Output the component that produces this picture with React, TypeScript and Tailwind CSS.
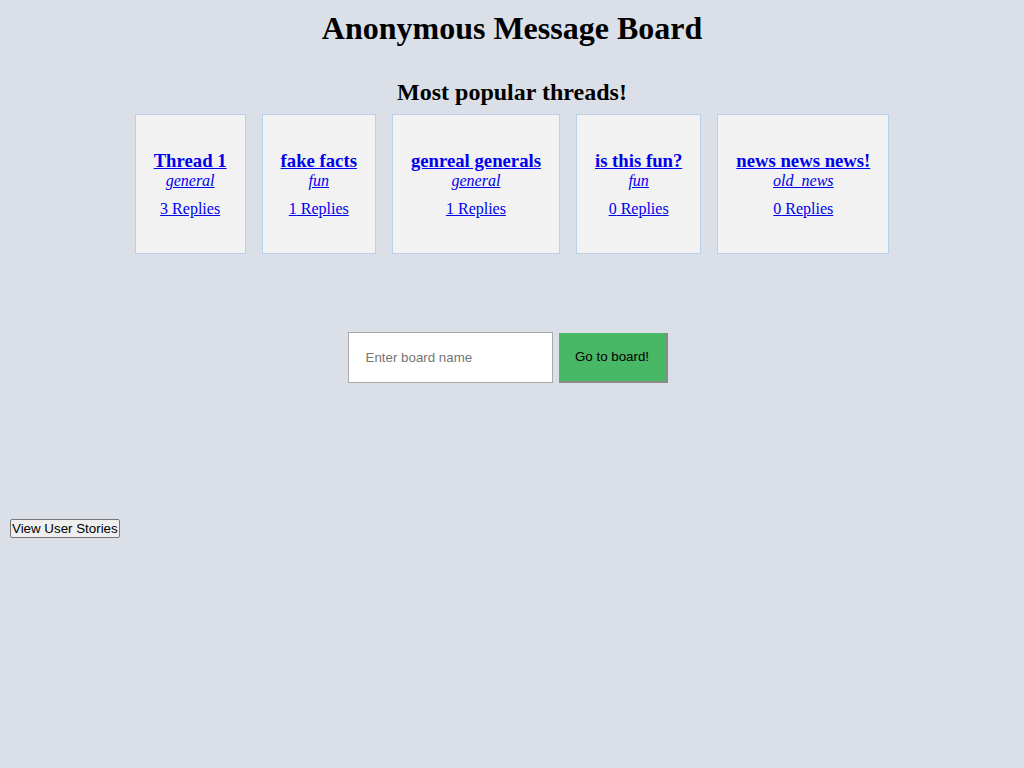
import React from 'react';

interface Thread {
    title: string;
    board: string;
    replies: number;
}

const threads: Thread[] = [
    { title: 'Thread 1', board: 'general', replies: 3 },
    { title: 'fake facts', board: 'fun', replies: 1 },
    { title: 'genreal generals', board: 'general', replies: 1 },
    { title: 'is this fun?', board: 'fun', replies: 0 },
    { title: 'news news news!', board: 'old_news', replies: 0 },
];

const ThreadCard: React.FC<{ thread: Thread }> = ({ thread }) => (
    <div className="flex h-[140px] flex-col items-center border border-[#b9d2ea] bg-[#f2f2f2] px-[18px] pt-[35px] text-center">
        <a href="#" className="text-[18.72px] font-bold leading-[22px] text-[#0000ee] underline">
            {thread.title}
        </a>
        <a href="#" className="text-base italic leading-[18px] text-[#0000ee] underline">
            {thread.board}
        </a>
        <a href="#" className="mt-[10px] text-base leading-[18px] text-[#0000ee] underline">
            {thread.replies} Replies
        </a>
    </div>
);

export default function App() {
    return (
        <div className="min-h-screen bg-[#dbe0e8] font-['Liberation_Serif',serif] text-black">
            <h1 className="pt-[10px] text-center text-[32px] font-bold leading-[37px]">
                Anonymous Message Board
            </h1>

            {/* Populares */}
            <h2 className="mt-[31px] text-center text-2xl font-bold leading-[28px]">
                Most popular threads!
            </h2>
            <div className="mt-[8px] flex justify-center gap-[16px]">
                {threads.map((t) => (
                    <ThreadCard key={t.title} thread={t} />
                ))}
            </div>

            {/* Buscar tablero */}
            <div className="mt-[78px] flex items-center justify-center gap-[6px] pr-[9px] font-['Liberation_Sans',sans-serif] text-[13.33px]">
                <input
                    type="text"
                    placeholder="Enter board name"
                    className="h-[51px] w-[205px] border border-[#a9a9a9] bg-white px-[17px] placeholder:text-[#757575] focus:outline-none"
                />
                <button className="h-[50px] w-[109px] border-r-2 border-b-2 border-[#8a8a8a] bg-[#48b866] text-black">
                    Go to board!
                </button>
            </div>

            <div className="mt-[133px] px-[10px]">
                <button className="rounded-[2px] border border-[#767676] bg-[#efefef] px-[1px] font-['Liberation_Sans',sans-serif] text-[13.33px] leading-[17px]">
                    View User Stories
                </button>
            </div>
        </div>
    );
}
